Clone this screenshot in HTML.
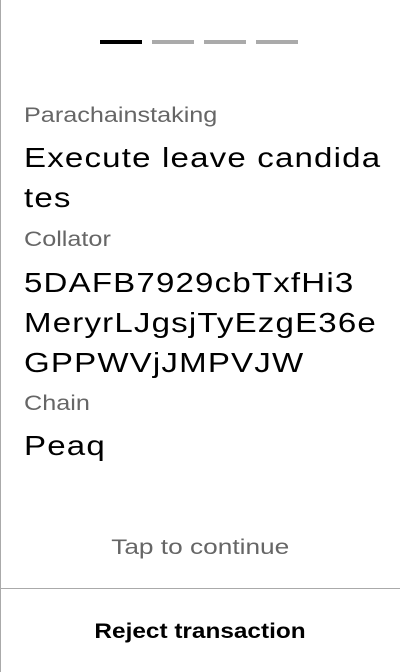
<!DOCTYPE html>
<html><head><style>
body{margin:0;width:400px;height:672px;background:#fff;font-family:"Liberation Sans",sans-serif;position:relative;overflow:hidden}
.lb{position:absolute;left:0;top:0;width:1px;height:672px;background:#aaa}
.bar{position:absolute;top:40px;height:4px;width:42px;background:#aaa}
.t{position:absolute;left:24px;white-space:nowrap;transform-origin:0 0;line-height:1.15}
.s{font-size:21px;color:#666;transform:scaleX(1.2)}
.b{font-size:28px;color:#000;letter-spacing:1px;transform:scaleX(1.18)}
.c{position:absolute;left:0;width:400px;text-align:center;line-height:1.15}
</style></head><body>
<div class="lb"></div>
<div class="bar" style="left:100px;background:#000"></div>
<div class="bar" style="left:152px"></div>
<div class="bar" style="left:204px"></div>
<div class="bar" style="left:256px"></div>
<div class="t s" style="top:104px">Parachainstaking</div>
<div class="t b" style="top:142px">Execute leave candida</div>
<div class="t b" style="top:182px">tes</div>
<div class="t s" style="top:228px">Collator</div>
<div class="t b" style="top:267px">5DAFB7929cbTxfHi3</div>
<div class="t b" style="top:307px">MeryrLJgsjTyEzgE36e</div>
<div class="t b" style="top:347px">GPPWVjJMPVJW</div>
<div class="t s" style="top:392px">Chain</div>
<div class="t b" style="top:430px">Peaq</div>
<div class="c" style="top:536px;font-size:21px;color:#666"><span style="display:inline-block;transform:scaleX(1.25)">Tap to continue</span></div>
<div style="position:absolute;left:0;top:588px;width:400px;height:1px;background:#aaa"></div>
<div class="c" style="top:620px;font-size:21px;font-weight:bold;color:#000"><span style="display:inline-block;transform:scaleX(1.16)">Reject transaction</span></div>
</body></html>
